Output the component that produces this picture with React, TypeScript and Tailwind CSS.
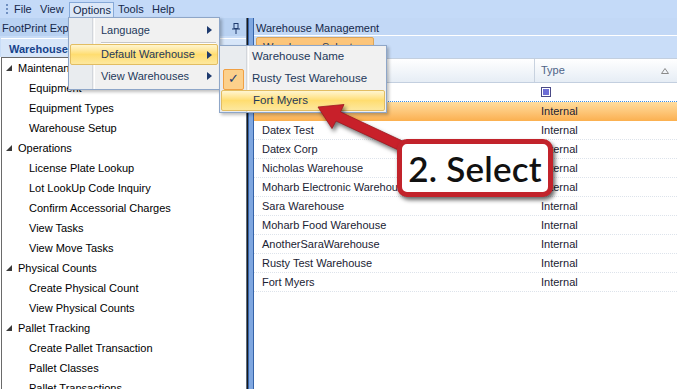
import React from "react";

const tree: { label: string; group?: boolean }[] = [
  { label: "Maintenance", group: true },
  { label: "Equipment" },
  { label: "Equipment Types" },
  { label: "Warehouse Setup" },
  { label: "Operations", group: true },
  { label: "License Plate Lookup" },
  { label: "Lot LookUp Code Inquiry" },
  { label: "Confirm Accessorial Charges" },
  { label: "View Tasks" },
  { label: "View Move Tasks" },
  { label: "Physical Counts", group: true },
  { label: "Create Physical Count" },
  { label: "View Physical Counts" },
  { label: "Pallet Tracking", group: true },
  { label: "Create Pallet Transaction" },
  { label: "Pallet Classes" },
  { label: "Pallet Transactions" },
];

const rows = [
  "Datex Test",
  "Datex Corp",
  "Nicholas Warehouse",
  "Moharb Electronic Warehouse",
  "Sara Warehouse",
  "Moharb Food Warehouse",
  "AnotherSaraWarehouse",
  "Rusty Test Warehouse",
  "Fort Myers",
];

function Tri() {
  return (
    <svg width="6" height="6" viewBox="0 0 6 6" className="shrink-0">
      <polygon points="6,0 6,6 0,6" fill="#3a3a3a" />
    </svg>
  );
}

function RightArrow() {
  return (
    <svg width="5" height="8" viewBox="0 0 5 8">
      <polygon points="0,0 5,4 0,8" fill="#1e3a6e" />
    </svg>
  );
}

export default function App() {
  return (
    <div className="relative w-[677px] h-[389px] overflow-hidden bg-white font-['Liberation_Sans',Arial,sans-serif] text-[11px] text-black">
      {/* Menu bar */}
      <div className="h-[18px] bg-[#c4daf8] flex items-center">
        <div className="w-[12px] flex flex-col items-center gap-[2px] pl-[2px]">
          <div className="w-[2px] h-[2px] bg-[#6f8fc0]" />
          <div className="w-[2px] h-[2px] bg-[#6f8fc0]" />
          <div className="w-[2px] h-[2px] bg-[#6f8fc0]" />
        </div>
        <div className="pl-[1px] text-[#15284a] flex items-center h-full">
          <span className="px-[1px] w-[27px]">File</span>
          <span className="w-[29px]">View</span>
          <span className="h-[16px] mt-[2px] px-[3px] border border-b-0 border-[#86a9d8] bg-[#dce8f8] flex items-center w-[45px]">Options</span>
          <span className="pl-[4px] w-[38px]">Tools</span>
          <span>Help</span>
        </div>
      </div>

      <div className="flex h-[371px]">
        {/* Left panel */}
        <div className="w-[247px] flex flex-col border-r border-[#5d6c80]">
          <div className="h-[18px] bg-[#b9d2f2] flex items-center justify-between pl-[2px] pr-[6px] pt-[2px] text-[#15284a]">
            <span>FootPrint Explorer</span>
            <svg width="8" height="11" viewBox="0 0 8 11">
              <rect x="2" y="0.5" width="4" height="5" fill="none" stroke="#1e3a6e" />
              <line x1="0" y1="6" x2="8" y2="6" stroke="#1e3a6e" />
              <line x1="4" y1="6" x2="4" y2="11" stroke="#1e3a6e" />
            </svg>
          </div>
          <div className="h-[21px] bg-[#c9ddf7] pt-[2px] pl-[1px]">
            <div className="h-[19px] bg-[#d7e6f9] border-t border-white flex items-center pl-[8px] pt-[2px] font-bold text-[#15428b]">
              Warehouse Explorer
            </div>
          </div>
          <div className="flex-1 border-l border-t border-[#6a6a6a] ml-[1px] bg-white">
            {tree.map((t, i) => (
              <div key={i} className={`h-[20px] flex items-center ${t.group ? "pl-[4px] gap-[6px]" : "pl-[27px]"}`}>
                {t.group && <Tri />}
                <span>{t.label}</span>
              </div>
            ))}
          </div>
        </div>

        {/* Splitter */}
        <div className="w-[1px] bg-[#1a1a1a]" />
        <div className="w-[6px] bg-[#7fa7e0] border-x border-[#3563a8]" />

        {/* Right panel */}
        <div className="flex-1 flex flex-col">
          <div className="h-[17px] bg-[#c2d8f6] flex items-center pl-[2px] pt-[3px] text-[#15284a]">Warehouse Management</div>
          <div className="h-[1px] bg-white" />
          <div className="h-[22px] bg-[#c9ddf8] pl-[2px] pt-[1px]">
            <div className="w-[118px] h-[21px] bg-[#fcc57a] border border-[#dba55a] rounded-t-[2px] flex items-center pl-[6px] text-[#1e395b]">
              Warehouse Selector
            </div>
          </div>
          {/* Grid header */}
          <div className="h-[25px] flex border-t border-b border-[#c3cfdf] bg-gradient-to-b from-white to-[#e6edf5] text-[#4f6488]">
            <div className="w-[281px] border-r border-[#c8d2df] flex items-center pl-[7px]">Name</div>
            <div className="flex-1 flex items-center justify-between pl-[6px] pr-[8px]">
              <span>Type</span>
              <svg width="8" height="6" viewBox="0 0 8 6">
                <polygon points="4,0.5 7.5,5.5 0.5,5.5" fill="none" stroke="#8a8a8a" />
              </svg>
            </div>
          </div>
          {/* Filter row */}
          <div className="h-[19px] flex border-b border-dotted border-[#3a8ee6]">
            <div className="w-[281px]" />
            <div className="flex-1 flex items-center pl-[6px]">
              <div className="w-[10px] h-[10px] border border-[#4a4a86] bg-white flex items-center justify-center">
                <div className="w-[6px] h-[6px] bg-[#6f6fd6]" />
              </div>
            </div>
          </div>
          {/* Selected row */}
          <div className="h-[19px] flex bg-gradient-to-b from-[#ffdd9e] to-[#fbb04f] text-[#1a2233]">
            <div className="w-[281px]" />
            <div className="flex-1 flex items-center pl-[6px]">Internal</div>
          </div>
          {rows.map((r) => (
            <div key={r} className="h-[19px] flex border-b border-dotted border-[#dde3eb] text-[#1a2233]">
              <div className="w-[281px] flex items-center pl-[8px]">{r}</div>
              <div className="flex-1 flex items-center pl-[6px]">Internal</div>
            </div>
          ))}
        </div>
      </div>

      {/* Options dropdown */}
      <div className="absolute left-[68px] top-[17px] w-[152px] h-[73px] bg-[#f1f1f1] border border-[#8ea6c8] shadow-[2px_2px_3px_rgba(0,0,0,0.25)] text-[#1e395b] text-[11px]">
        <div className="absolute left-0 top-0 bottom-0 w-[24px] bg-[#e9ecef] border-r border-[#d2d6dc]" />
        <div className="absolute left-[25px] top-0 bottom-0 w-[1px] bg-white" />
        <div className="relative h-[24px] flex items-center pl-[32px] pr-[7px] justify-between">
          <span>Language</span>
          <RightArrow />
        </div>
        <div className="relative ml-[32px] mr-[3px] h-[2px] border-t border-[#c7c7c7] border-b border-b-white" />
        <div className="relative mx-[1px] h-[21px] rounded-[2px] border border-[#e2bd62] bg-gradient-to-b from-[#fff5cf] via-[#ffdd70] to-[#fde89e] flex items-center pl-[30px] pr-[5px] justify-between">
          <span>Default Warehouse</span>
          <RightArrow />
        </div>
        <div className="relative h-[22px] flex items-center pl-[32px] pr-[7px] justify-between">
          <span>View Warehouses</span>
          <RightArrow />
        </div>
      </div>

      {/* Submenu */}
      <div className="absolute left-[219px] top-[45px] w-[168px] h-[68px] bg-[#f1f1f1] border border-[#8ea6c8] shadow-[2px_2px_3px_rgba(0,0,0,0.25)] text-[#1e395b] text-[11.5px]">
        <div className="absolute left-0 top-0 bottom-0 w-[27px] bg-[#e9ecef] border-r border-[#d2d6dc]" />
        <div className="absolute left-[28px] top-0 bottom-0 w-[1px] bg-white" />
        <div className="relative h-[22px] flex items-center pl-[32px]">Warehouse Name</div>
        <div className="relative h-[22px] flex items-center">
          <div className="ml-[3px] w-[21px] h-[21px] bg-[#fcd08b] border border-[#f0a044] rounded-[2px] flex items-center justify-center text-[#1e3a6e] text-[13px] font-['DejaVu_Sans',sans-serif]">
            ✓
          </div>
          <span className="ml-[8px]">Rusty Test Warehouse</span>
        </div>
        <div className="relative mx-[1px] h-[21px] rounded-[2px] border border-[#e2bd62] bg-gradient-to-b from-[#fff5cf] via-[#ffdd70] to-[#fde89e] flex items-center pl-[31px]">
          Fort Myers
        </div>
      </div>

      {/* Arrow */}
      <svg
        className="absolute left-0 top-0 pointer-events-none drop-shadow-[2px_3px_2px_rgba(0,0,0,0.55)]"
        width="677"
        height="389"
        viewBox="0 0 677 389"
      >
        <polygon
          points="318,107 344,104.5 340.5,112 411,145 407,154 336,121 332,128.5"
          fill="#c8202a"
          stroke="#9c1820"
          strokeWidth="0.8"
          strokeLinejoin="round"
        />
      </svg>

      {/* Callout */}
      <div className="absolute left-[397px] top-[139px] w-[156px] h-[58px] rounded-[10px] border-[5px] border-[#c2232b] bg-white shadow-[2px_3px_4px_rgba(0,0,0,0.6)] flex items-center justify-center">
        <span className="font-['Lato',sans-serif] font-semibold text-[35px] leading-none text-[#111] tracking-[0.2px]">2. Select</span>
      </div>
    </div>
  );
}
